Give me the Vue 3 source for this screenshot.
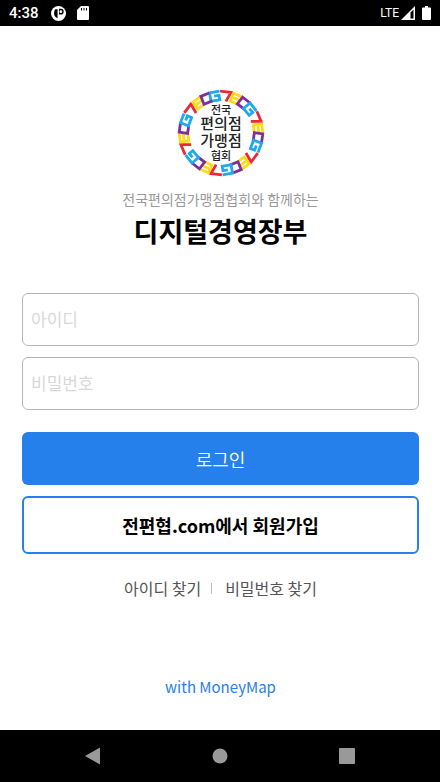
<template>
  <div class="screen">
    <header class="status-bar">
      <div class="status-left">
        <span class="clock">4:38</span>
        <svg width="15" height="15" viewBox="0 0 16 16" aria-hidden="true">
          <circle cx="8" cy="8" r="8" fill="#fff" />
          <path d="M4.500 3.500H7V13C5 12.500 3.300 10.500 3.300 8C3.300 6 3.800 4.600 4.500 3.500z" fill="#000" />
          <path d="M8.500 3h2a3 3 0 0 1 0 6h-2z" fill="#000" />
          <circle cx="10.500" cy="6" r="1.500" fill="#fff" />
        </svg>
        <svg class="sd-icon" width="12" height="14" viewBox="0 0 12 14" aria-hidden="true">
          <path d="M4 0h7a1 1 0 0 1 1 1v12a1 1 0 0 1-1 1H1a1 1 0 0 1-1-1V4z" fill="#fff" />
          <path d="M4.500 2v2.500M7 2v2.500M9.500 2v2.500" stroke="#000" />
        </svg>
      </div>
      <div class="status-right">
        <span class="network">LTE</span>
        <svg width="14" height="14" viewBox="0 0 14 14" aria-hidden="true">
          <path d="M0 14L14 0V14z" fill="#fff" />
          <path d="M9.500 6.500L12.500 3.500V12.500H9.500z" fill="#000" />
        </svg>
        <svg class="battery-icon" width="9" height="14" viewBox="0 0 9 14" aria-hidden="true">
          <path d="M3 0h3v1.500h2a1 1 0 0 1 1 1V13a1 1 0 0 1-1 1H1a1 1 0 0 1-1-1V2.500a1 1 0 0 1 1-1h2z" fill="#fff" />
        </svg>
      </div>
    </header>

    <main class="login">
      <svg class="logo" width="88" height="88" viewBox="-44 -44 88 88" role="img" aria-label="전국 편의점 가맹점 협회">
        <path
          v-for="mark in ringMarks"
          :key="mark.angle"
          :d="mark.d"
          :stroke="mark.color"
          :transform="`rotate(${mark.angle})`"
          stroke-width="2.800"
          fill="none"
        />
        <g class="logo-text" text-anchor="middle">
          <text y="-19" font-size="11">전국</text>
          <text y="-4" font-size="15">편의점</text>
          <text y="13" font-size="15">가맹점</text>
          <text y="27" font-size="11">협회</text>
        </g>
      </svg>

      <p class="subtitle">전국편의점가맹점협회와 함께하는</p>
      <h1 class="title">디지털경영장부</h1>

      <form class="login-form" @submit.prevent>
        <input v-model="userId" class="field" type="text" placeholder="아이디" aria-label="아이디" autocomplete="username" />
        <input
          v-model="password"
          class="field"
          type="password"
          placeholder="비밀번호"
          aria-label="비밀번호"
          autocomplete="current-password"
        />
        <button type="submit" class="login-btn">로그인</button>
        <button type="button" class="join-btn">전편협.com에서 회원가입</button>
      </form>

      <nav class="find-links">
        <a href="#find-id">아이디 찾기</a>
        <span class="divider"></span>
        <a href="#find-password">비밀번호 찾기</a>
      </nav>

      <p class="powered">with MoneyMap</p>
    </main>

    <footer class="nav-bar">
      <button type="button" class="nav-btn" aria-label="뒤로">
        <svg width="18" height="18" viewBox="0 0 18 18"><path d="M1 9L16 0.500V17.500z" fill="#999" /></svg>
      </button>
      <button type="button" class="nav-btn" aria-label="홈">
        <svg width="18" height="18" viewBox="0 0 18 18"><circle cx="9" cy="9" r="7.500" fill="#999" /></svg>
      </button>
      <button type="button" class="nav-btn" aria-label="최근 앱">
        <svg width="18" height="18" viewBox="0 0 18 18"><rect x="1" y="1" width="16" height="16" rx="1" fill="#999" /></svg>
      </button>
    </footer>
  </div>
</template>

<script setup>
import { ref } from 'vue'

const userId = ref('')
const password = ref('')

// 로고 테두리 문양: 네 가지 무늬가 60도 간격으로 반복
const pattern = [
  { angle: 7, color: '#ee2737', d: 'M-6 -41.500H5L1 -32' },
  { angle: -9, color: '#1fa9ec', d: 'M5 -41.500H-5V-33H4V-37.500H-1' },
  { angle: 23, color: '#ffd91a', d: 'M5 -41.500H-4V-33H5M-4 -37.500H5' },
  { angle: 38, color: '#7d2e98', d: 'M4 -41.500H-5V-33H4' },
]
const ringMarks = [0, 60, 120, 180, 240, 300].flatMap((base) =>
  pattern.map((mark) => ({ ...mark, angle: base + mark.angle })),
)
</script>

<style>
body {
  margin: 0;
  background: #fff;
}
</style>

<style scoped>
.screen {
  display: flex;
  flex-direction: column;
  min-height: 100vh;
  font-family: 'Noto Sans CJK KR', sans-serif;
  color: #000;
}

.status-bar {
  display: flex;
  align-items: center;
  justify-content: space-between;
  height: 26px;
  padding: 0 9px;
  background: #000;
  color: #fff;
  font-family: Roboto, sans-serif;
}

.status-left,
.status-right {
  display: flex;
  align-items: center;
}

.clock {
  margin-right: 12px;
  font-size: 15px;
  font-weight: 500;
}

.sd-icon {
  margin-left: 11px;
}

.network {
  margin-right: 2px;
  font-size: 12px;
}

.battery-icon {
  margin-left: 7px;
}

.login {
  flex: 1;
  display: flex;
  flex-direction: column;
  align-items: center;
  padding: 63px 21px 0 22px;
}

.logo-text {
  font-weight: 500;
  fill: #222;
}

.subtitle {
  margin: 10px 0 0;
  font-size: 14px;
  line-height: 24px;
  color: #999;
}

.title {
  margin: 0;
  font-size: 27px;
  line-height: 40px;
  font-weight: 700;
}

.login-form {
  display: flex;
  flex-direction: column;
  width: 100%;
  margin-top: 42px;
}

.field {
  box-sizing: border-box;
  width: 100%;
  height: 53px;
  margin: 0 0 11px;
  padding: 0 8px 3px;
  border: 1px solid #b5b5b5;
  border-radius: 6px;
  background: #fff;
  font-family: inherit;
  font-size: 17px;
  outline: none;
}

.field::placeholder {
  color: #d8d8d8;
  opacity: 1;
}

.field:focus {
  border-color: #2680eb;
}

.login-btn,
.join-btn {
  border-radius: 6px;
  font-family: inherit;
  font-size: 18px;
  cursor: pointer;
}

.login-btn {
  height: 53px;
  margin-top: 11px;
  border: none;
  background: #2680eb;
  color: #fff;
  font-weight: 350;
}

.join-btn {
  height: 58px;
  margin-top: 11px;
  border: 2px solid #2680eb;
  background: #fff;
  color: #000;
  font-weight: 700;
}

.find-links {
  display: flex;
  align-items: center;
  margin-top: 22px;
  font-size: 16px;
  line-height: 24px;
}

.find-links a {
  color: #555;
  text-decoration: none;
}

.divider {
  width: 1px;
  height: 11px;
  margin: 0 13px 0 10px;
  background: #bbb;
}

.powered {
  margin: 75px 0 0;
  font-size: 15px;
  line-height: 24px;
  color: #2680eb;
}

.nav-bar {
  display: flex;
  align-items: center;
  justify-content: space-around;
  height: 52px;
  padding: 0 29px;
  background: #000;
}

.nav-btn {
  display: flex;
  padding: 0;
  border: none;
  background: none;
  cursor: pointer;
}
</style>
